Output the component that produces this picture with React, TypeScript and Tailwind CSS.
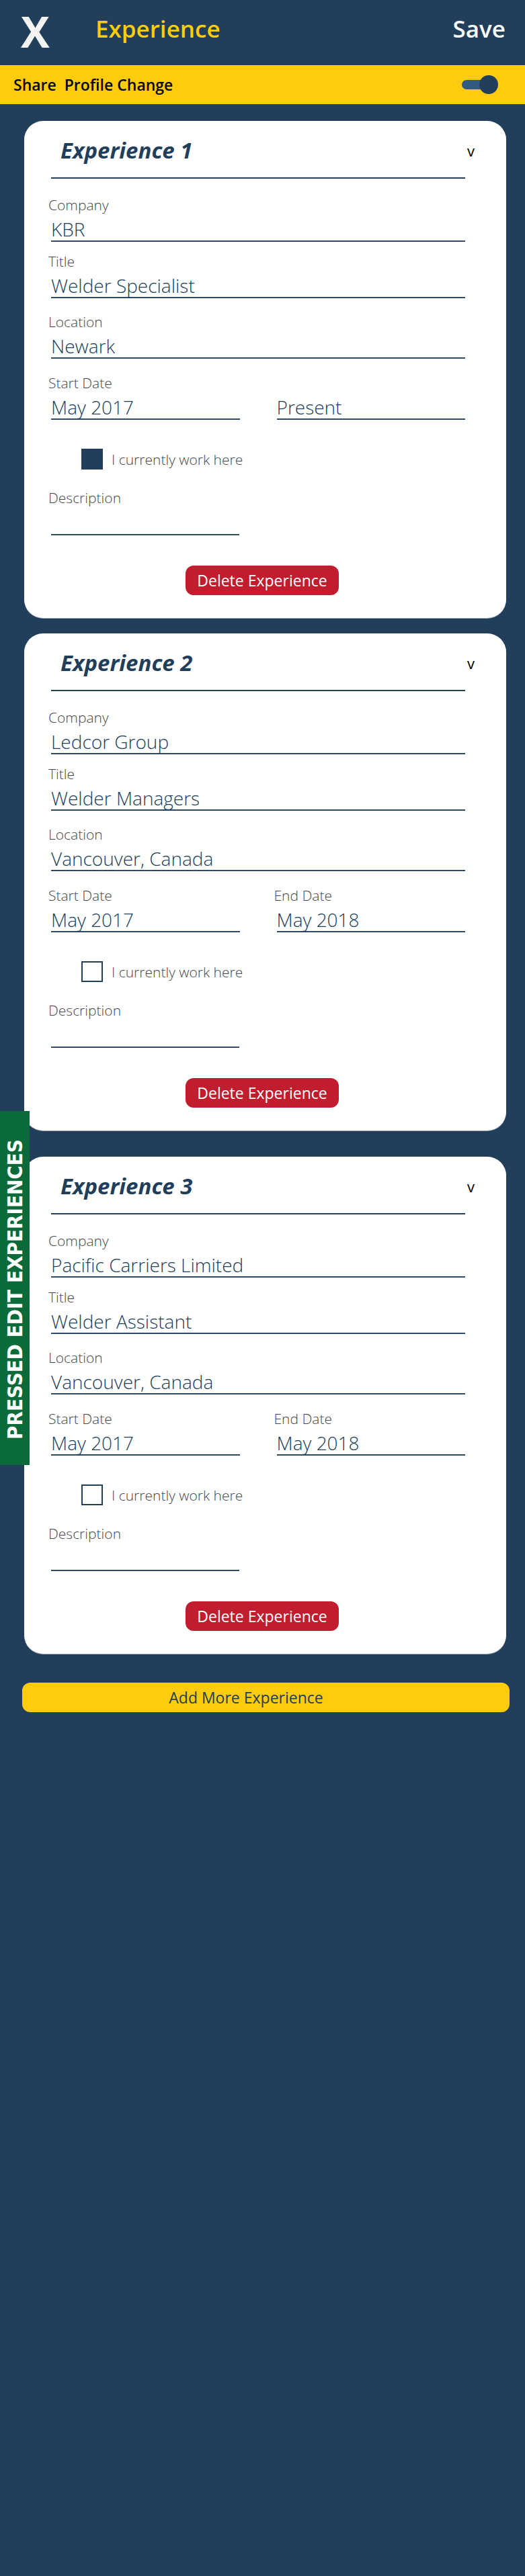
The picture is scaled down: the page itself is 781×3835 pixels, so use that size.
type Exp = {
  n: number;
  company: string;
  title: string;
  location: string;
  start: string;
  end: string;
  current: boolean;
};

const experiences: Exp[] = [
  { n: 1, company: "KBR", title: "Welder Specialist", location: "Newark", start: "May 2017", end: "Present", current: true },
  { n: 2, company: "Ledcor Group", title: "Welder Managers", location: "Vancouver, Canada", start: "May 2017", end: "May 2018", current: false },
  { n: 3, company: "Pacific Carriers Limited", title: "Welder Assistant", location: "Vancouver, Canada", start: "May 2017", end: "May 2018", current: false },
];

function Field({ label, value, className = "" }: { label?: string; value: string; className?: string }) {
  return (
    <div className={className}>
      <div className="h-[22px] text-[21px] leading-[22px] font-light text-[#474747] whitespace-nowrap">{label}</div>
      <div className="mt-[8px] ml-[4px] h-[36px] border-b-2 border-[#2e4a6a] text-[28px] leading-[34px] font-light text-[#213e5a] whitespace-nowrap">
        {value}
      </div>
    </div>
  );
}

function ExperienceCard({ exp, className = "" }: { exp: Exp; className?: string }) {
  return (
    <div className={`ml-[36px] w-[717px] rounded-[28px] bg-white pl-[36px] pr-[61px] pt-[24px] pb-[34px] shadow-[0_1px_0_#9aa7b5] ${className}`}>
      <div className="-mr-[14px] flex h-[40px] items-center justify-between pl-[18px]">
        <span className="text-[33px] leading-[40px] font-bold italic text-[#213e5a]">Experience {exp.n}</span>
        <span className="text-[22px] leading-[40px] text-black">v</span>
      </div>
      <div className="mt-[20px] ml-[4px] h-[2px] bg-[#213e5a]" />

      <Field className="mt-[28px]" label="Company" value={exp.company} />
      <Field className="mt-[18px]" label="Title" value={exp.title} />
      <Field className="mt-[24px]" label="Location" value={exp.location} />

      <div className="mt-[25px] grid grid-cols-2 gap-x-[51px]">
        <Field label="Start Date" value={exp.start} />
        <Field label={exp.current ? "" : "End Date"} value={exp.end} />
      </div>

      <div className="mt-[43px] ml-[49px] flex items-center gap-[13px]">
        <div
          className={`h-[31px] w-[32px] border-2 border-[#213e5a] ${exp.current ? "bg-[#213e5a]" : "bg-white"}`}
        />
        <span className="text-[21px] leading-[22px] font-light text-[#474747]">I currently work here</span>
      </div>

      <div className="mt-[31px] w-[284px]">
        <div className="h-[22px] text-[21px] leading-[22px] font-light text-[#474747]">Description</div>
        <div className="mt-[9px] ml-[4px] h-[36px] border-b-2 border-[#2e4a6a]" />
      </div>

      <div className="mt-[45px] ml-[204px] flex h-[44px] w-[228px] items-center justify-center rounded-[12px] bg-[#c11d2f] text-[23px] leading-[44px] text-white">
        Delete Experience
      </div>
    </div>
  );
}

export default function App() {
  return (
    <div className="relative min-h-[3835px] w-full bg-[#213e5a] font-['Open_Sans',sans-serif]">
      {/* top bar */}
      <div className="flex h-[97px] items-start">
        <div className="ml-[31px] mt-[15px] w-[111px] text-[64px] leading-[64px] font-bold text-[#f4f4f4]">X</div>
        <div className="mt-[23px] text-[35px] leading-[40px] font-semibold text-[#fecc0c]">Experience</div>
        <div className="ml-auto mr-[29px] mt-[23px] text-[35px] leading-[40px] font-semibold text-white">Save</div>
      </div>

      <div className="flex h-[58px] items-center justify-between bg-[#fecc0c] pl-[20px] pr-[40px]">
        <span className="text-[23px] leading-[32px] font-semibold text-black whitespace-pre">Share  Profile Change</span>
        <div className="relative h-[28px] w-[54px]">
          <div className="absolute left-0 top-[7px] h-[14px] w-[44px] rounded-full bg-[#335a80]" />
          <div className="absolute right-0 top-0 h-[28px] w-[28px] rounded-full bg-[#213e5a]" />
        </div>
      </div>

      <ExperienceCard exp={experiences[0]} className="mt-[25px]" />
      <ExperienceCard exp={experiences[1]} className="mt-[23px]" />
      <ExperienceCard exp={experiences[2]} className="mt-[39px]" />

      <div className="ml-[33px] mt-[43px] flex h-[44px] w-[725px] items-center justify-center rounded-[12px] bg-[#fecc0c] pr-[59px] text-[23px] leading-[44px] text-[#213e5a]">
        Add More Experience
      </div>

      {/* side tag */}
      <div className="absolute left-0 top-[1654px] h-[527px] w-[44px] rotate-180 bg-[#0b6a39] pt-[38px] font-['DejaVu_Sans_Condensed','DejaVu_Sans',sans-serif] text-[31px] leading-[44px] font-bold font-stretch-condensed text-white [writing-mode:vertical-rl] whitespace-nowrap">
        PRESSED EDIT EXPERIENCES
      </div>
    </div>
  );
}
